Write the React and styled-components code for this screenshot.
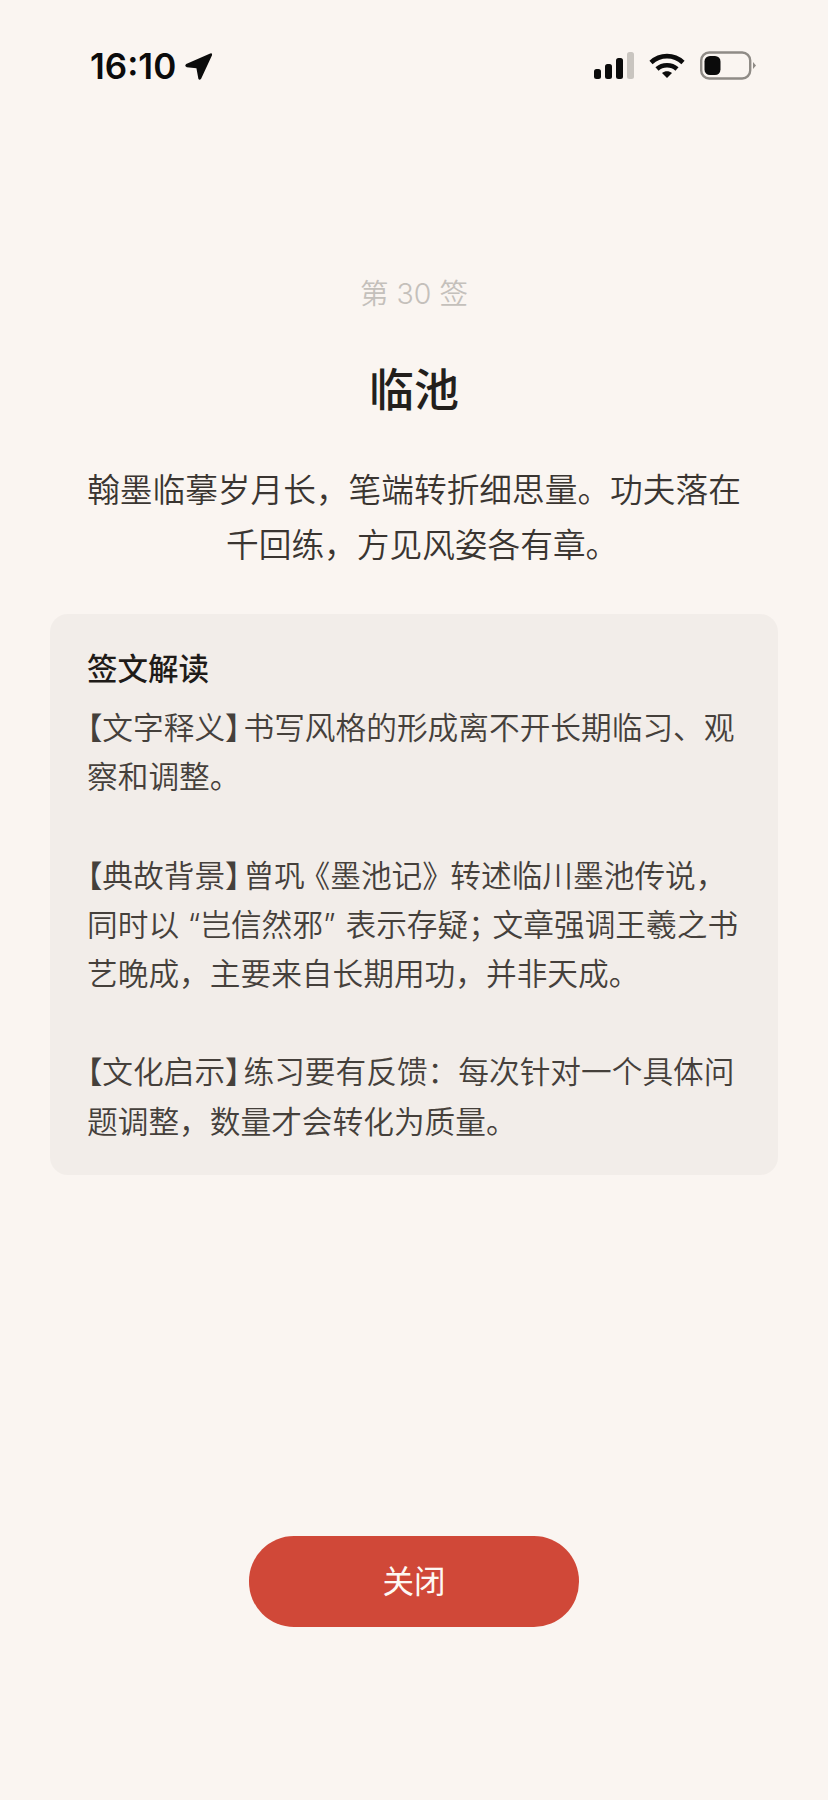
import React from "react";
import styled, { createGlobalStyle } from "styled-components";

const Global = createGlobalStyle`
  html, body { margin: 0; padding: 0; background: #faf5f1; }
  body { font-family: Inter, "Noto Sans CJK SC", "Noto Sans", sans-serif; }
`;
const Page = styled.div`
  width: 828px; height: 1800px; background: #faf5f1; display: flex; flex-direction: column; overflow: hidden;
`;
const StatusBar = styled.div`
  display: flex; justify-content: space-between; align-items: center;
  height: 44px; margin-top: 44px; padding: 0 72px 0 90px;
`;
const Clock = styled.div`
  display: flex; align-items: center; gap: 7px;
  font: 600 35px/44px Inter, "Liberation Sans", sans-serif; color: #0b0b0b;
`;
const StatusIcons = styled.div`display: flex; align-items: center; gap: 15px;`;
const Sign = styled.div`
  margin-top: 186px; text-align: center; font-size: 28.5px; line-height: 40px; color: #c4c0bb; font-weight: 350;
`;
const Title = styled.h1`
  margin: 45px 0 0; text-align: center; font-size: 45px; line-height: 64px; font-weight: 500; color: #231f1c;
`;
const Poem = styled.div`
  margin: 40px 0 0; text-align: center; font-size: 32.7px; line-height: 54.5px; font-weight: 350; color: #3a3531;
`;
const Card = styled.section`
  margin: 42px 50px 0; padding: 33px 37px 30px; background: #f2ede9; border-radius: 18px; height: 561px; box-sizing: border-box;
`;
const CardTitle = styled.h2`
  margin: 0; font-size: 30.5px; line-height: 44px; font-weight: 500; color: #1f1b18;
`;
const Para = styled.div`
  margin: 12px 0 0; font-size: 30.7px; line-height: 49.2px; font-weight: 350; color: #45403b;
  & + & { margin-top: 49.2px; }
`;
const Line = styled.div`white-space: nowrap;`;
const Half = styled.span`
  font-feature-settings: "halt";
  margin-left: ${p => p.$before || 0}px;
  margin-right: ${p => p.$after || 0}px;
`;
const Footer = styled.div`margin-top: 361px; display: flex; justify-content: center;`;
const CloseButton = styled.button`
  width: 330px; height: 91px; border: 0; border-radius: 45px; padding: 0 0 3px; background: #d04838; color: #fdf8f4;
  font: 400 31.5px/1 "Noto Sans CJK SC", sans-serif;
`;

const Locate = () => (
  <svg width="32" height="32" viewBox="0 0 30 30"><path d="M3 13.2 L25.5 3.2 Q27.8 2.6 27.2 5 L17 27 Q15.4 29 14.4 27 L12.6 17 L3.6 16.2 Q1 15 3 13.2Z" fill="#0b0b0b"/></svg>
);
const Signal = () => (
  <svg width="40" height="28" viewBox="0 0 40 28">
    <rect x="0" y="17" width="7" height="10" rx="2.5" fill="#0b0b0b"/>
    <rect x="11" y="12" width="7" height="15" rx="2.5" fill="#0b0b0b"/>
    <rect x="22" y="6" width="7" height="21" rx="2.5" fill="#0b0b0b"/>
    <rect x="33" y="0" width="7" height="27" rx="2.5" fill="#c9c5c0"/>
  </svg>
);
const Wifi = () => (
  <svg width="36" height="28" viewBox="0 0 36 28" fill="none" stroke="#0b0b0b" strokeWidth="4.6">
    <path d="M2 10.5 C11 2 25 2 34 10.5"/>
    <path d="M8 17 C13.5 12 22.5 12 28 17"/>
    <path d="M13 21 L18 26 L23 21 C20 18.5 16 18.5 13 21Z" fill="#0b0b0b" stroke="none"/>
  </svg>
);
const Battery = () => (
  <svg width="56" height="30" viewBox="0 0 56 30">
    <rect x="1.2" y="1.5" width="49" height="26" rx="8" fill="none" stroke="#8f8b86" strokeWidth="2.4"/>
    <rect x="4.5" y="5" width="16" height="19" rx="5.5" fill="#0b0b0b"/>
    <path d="M53 11 L56 14.5 L53 18Z" fill="#8f8b86"/>
  </svg>
);

const paragraphs = [
  [[{ t: "【" }, "文字释义", { t: "】", after: 3 }, "书写风格的形成离不开长期临习、观"], ["察和调整。"]],
  [
    [{ t: "【" }, "典故背景", { t: "】", after: 3 }, "曾巩", { t: "《", before: 10 }, "墨池记", { t: "》", after: 12.7 }, "转述临川墨池传说，"],
    ["同时以 “岂信然邪", { t: "”", after: 10 }, "表示存疑", { t: "；", after: 9 }, "文章强调王羲之书"],
    ["艺晚成，主要来自长期用功，并非天成。"],
  ],
  [[{ t: "【" }, "文化启示", { t: "】", after: 3 }, "练习要有反馈：每次针对一个具体问"], ["题调整，数量才会转化为质量。"]],
];

export default function App() {
  return (
    <Page>
      <Global />
      <StatusBar>
        <Clock>16:10<Locate /></Clock>
        <StatusIcons><Signal /><Wifi /><Battery /></StatusIcons>
      </StatusBar>
      <Sign>第 30 签</Sign>
      <Title>临池</Title>
      <Poem>
        <Line>翰墨临摹岁月长，笔端转折细思量。功夫落在</Line>
        <Line>千回练，方见风姿各有章<Half>。</Half></Line>
      </Poem>
      <Card>
        <CardTitle>签文解读</CardTitle>
        {paragraphs.map((lines, i) => (
          <Para key={i}>
            {lines.map((parts, j) => (
              <Line key={j}>
                {parts.map((part, k) =>
                  typeof part === "string"
                    ? <span key={k}>{part}</span>
                    : <Half key={k} $before={part.before} $after={part.after}>{part.t}</Half>
                )}
              </Line>
            ))}
          </Para>
        ))}
      </Card>
      <Footer><CloseButton>关闭</CloseButton></Footer>
    </Page>
  );
}
